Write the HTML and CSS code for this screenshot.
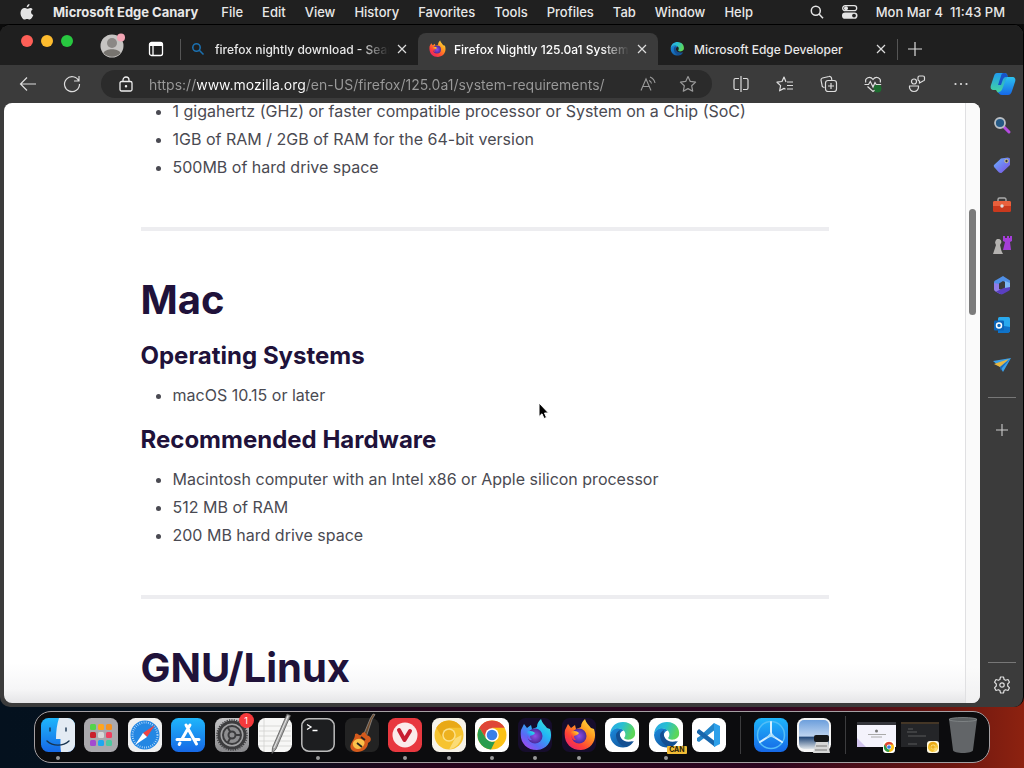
FILE: index.html
```html
<!DOCTYPE html>
<html lang="en">
<head>
<meta charset="utf-8">
<title>Firefox Nightly 125.0a1 System Requirements</title>
<link rel="stylesheet" href="styles.css">
</head>
<body>
<svg class="defs" width="0" height="0" aria-hidden="true">
  <defs>
    <linearGradient id="gBlue" x1="0" y1="0" x2="0" y2="1"><stop offset="0" stop-color="#1fb6fb"/><stop offset="1" stop-color="#1668e6"/></linearGradient>
    <linearGradient id="gGray" x1="0" y1="0" x2="0" y2="1"><stop offset="0" stop-color="#c5c5c7"/><stop offset="1" stop-color="#88888b"/></linearGradient>
    <linearGradient id="gFox" x1="1" y1="0" x2="0.2" y2="1"><stop offset="0" stop-color="#fff04a"/><stop offset=".4" stop-color="#ff9a1f"/><stop offset=".75" stop-color="#ff4038"/><stop offset="1" stop-color="#e5206f"/></linearGradient>
    <linearGradient id="gNight" x1="1" y1="0" x2="0.2" y2="1"><stop offset="0" stop-color="#3ff0d0"/><stop offset=".4" stop-color="#22b8f5"/><stop offset=".75" stop-color="#5b68f5"/><stop offset="1" stop-color="#a845f0"/></linearGradient>
    <radialGradient id="gOrb"><stop offset="0" stop-color="#9150e8"/><stop offset="1" stop-color="#4a2a9c"/></radialGradient>
    <linearGradient id="gEdgeTop" x1="0" y1="0" x2="1" y2="0.3"><stop offset="0" stop-color="#2aa4e8"/><stop offset=".5" stop-color="#28bfd2"/><stop offset="1" stop-color="#5cd65a"/></linearGradient>
    <linearGradient id="gEdgeLow" x1="0" y1="0" x2="1" y2="1"><stop offset="0" stop-color="#1b8be0"/><stop offset="1" stop-color="#114a8b"/></linearGradient>
    <linearGradient id="gCopA" x1="0" y1="0" x2="0" y2="1"><stop offset="0" stop-color="#1f9cf0"/><stop offset="1" stop-color="#45d69a"/></linearGradient>
    <linearGradient id="gCopB" x1="0" y1="0" x2="0" y2="1"><stop offset="0" stop-color="#2cc3ee"/><stop offset="1" stop-color="#1668e8"/></linearGradient>
    <linearGradient id="gPurple" x1="0" y1="0" x2="1" y2="1"><stop offset="0" stop-color="#69b5ff"/><stop offset="1" stop-color="#7a4be0"/></linearGradient>
    <linearGradient id="gSky" x1="0" y1="0" x2="0" y2="1"><stop offset="0" stop-color="#6d9fdc"/><stop offset=".55" stop-color="#bcd3ef"/><stop offset=".6" stop-color="#274c7c"/><stop offset="1" stop-color="#dfe5ea"/></linearGradient>
    <symbol id="fox" viewBox="0 0 34 34">
      <path d="M3 12l3-6 3 4 4-3 1 4c2-1 4-1 5-2 0-4 2-6 4-8 1 4 4 6 6 9l3 1c3 8 0 20-13 21C8 32 1 24 3 12z"/>
      <circle cx="17" cy="18" r="7.500" fill="url(#gOrb)"/>
      <path d="M9 14c3-2 6-1 8 1-1 2-3 2-5 3 0 2 1 3 2 4-3 1-6-3-5-8z"/>
    </symbol>
    <symbol id="edge" viewBox="0 0 34 34">
      <path fill="url(#gEdgeLow)" d="M5 17c1 10 9 14 17 12 3-1 5-3 7-6-7 4-13 1-14-4-1-4 2-6 4-7-6-4-13-2-14 5z"/>
      <path fill="url(#gEdgeTop)" d="M5 16C6 8 11 4 18 4c9 0 13 7 12 13-1 5-9 6-11 3 2-2 2-6-1-8-5-3-11-1-13 4z"/>
      <path fill="#144f92" d="M11 17c0-2 2-4 4-5-2 8 4 14 13 11-3 4-7 6-10 5-4-2-7-6-7-11z"/>
    </symbol>
    <symbol id="chrome" viewBox="0 0 34 34">
      <circle cx="17" cy="17" r="14.500" fill="#fbc116"/>
      <path fill="#df4636" d="M4.400 9.800a14.500 14.500 0 0 1 25.200 0H17l-6 10.700z"/>
      <path fill="#2a9c4e" d="M4.400 9.800L11 20.500l6 3.500 3-.5-4 8A14.500 14.500 0 0 1 4.400 9.800z"/>
      <circle cx="17" cy="17" r="6.800" fill="#fff"/><circle cx="17" cy="17" r="5.300" fill="#397fe8"/>
    </symbol>
    <symbol id="canary" viewBox="0 0 34 34">
      <circle cx="17" cy="17" r="14.500" fill="#f6c32f"/>
      <path fill="#e9a916" d="M4.400 9.800a14.500 14.500 0 0 1 25.200 0H17l-6 10.700z"/>
      <path fill="#fbdc77" d="M29.500 17A14.500 14.500 0 0 1 17 31.500l6-11z"/>
      <circle cx="17" cy="17" r="6.800" fill="#fbe08a"/><circle cx="17" cy="17" r="5.300" fill="#eeb21f"/>
    </symbol>
    <symbol id="x" viewBox="0 0 10 10"><path d="M1 1l8 8M9 1L1 9" fill="none" stroke="#ddd" stroke-width="1.200"/></symbol>
  </defs>
</svg>

<header class="menubar">
  <button class="apple" aria-label="Apple menu"><svg width="14" height="16" viewBox="0 0 14 16"><path fill="#e4e4e4" d="M9.500 0c.1 1.700-1.200 3.200-2.800 3.300C6.600 1.700 8 .2 9.500 0zM12.700 5.200c-2.500 1.600-1.900 4.700.6 5.800-.7 2-2.100 4.500-3.600 4.500-1 0-1.400-.6-2.600-.6s-1.600.6-2.500.6C2.700 15.500.4 11.900.5 8.700.6 5.600 2.600 4 4.400 4c1.200 0 2 .7 2.800.7S9 3.900 10.300 3.900c.9 0 1.800.5 2.400 1.300z"/></svg></button>
  <nav class="menus">
    <button class="menu app">Microsoft Edge Canary</button><button class="menu">File</button><button class="menu">Edit</button><button class="menu">View</button><button class="menu">History</button><button class="menu">Favorites</button><button class="menu">Tools</button><button class="menu">Profiles</button><button class="menu">Tab</button><button class="menu">Window</button><button class="menu">Help</button>
  </nav>
  <div class="status">
    <button aria-label="Spotlight"><svg width="14" height="14" viewBox="0 0 14 14" fill="none" stroke="#e4e4e4" stroke-width="1.500"><circle cx="5.800" cy="5.800" r="4.500"/><path d="M9 9l4 4.200"/></svg></button>
    <button aria-label="Control Center"><svg width="16" height="14" viewBox="0 0 16 14"><rect x=".7" y=".7" width="14" height="5" rx="2.500" fill="none" stroke="#e4e4e4" stroke-width="1.300"/><circle cx="4" cy="3.200" r="2" fill="#e4e4e4"/><rect y="7.500" width="15.500" height="6.300" rx="3.100" fill="#e4e4e4"/><circle cx="12" cy="10.600" r="1.900" fill="#222"/></svg></button>
    <time>Mon Mar 4&nbsp; 11:43 PM</time>
  </div>
</header>

<main class="window">
  <div class="tabstrip">
    <div class="lights"><button class="red" aria-label="Close"></button><button class="yellow" aria-label="Minimize"></button><button class="green" aria-label="Zoom"></button></div>
    <button class="profile" aria-label="Profile"><svg width="26" height="26" viewBox="0 0 26 26"><circle cx="12" cy="14" r="11.500" fill="#c6c4c2"/><circle cx="12" cy="11" r="5" fill="#8b8885"/><path d="M3.500 21c2-5 15-5 17 0a11.500 11.500 0 0 1-17 0z" fill="#77746f"/><circle cx="21" cy="5.500" r="4" fill="#f3a6b5"/></svg></button>
    <button class="workspace" aria-label="Tab actions"><svg width="16" height="16" viewBox="0 0 16 16" fill="none" stroke="#fff" stroke-width="1.300"><rect x="1.500" y="1.500" width="13" height="13" rx="2"/><path d="M1.500 3.500h13" stroke-width="3"/><path d="M5 4v10"/></svg></button>
    <div class="tab first">
      <svg class="fav" width="16" height="16" viewBox="0 0 16 16" fill="none" stroke="#1b6fae" stroke-width="1.600"><circle cx="6.500" cy="6.500" r="3.700"/><path d="M9.300 9.300l4.200 4.200"/></svg>
      <span class="title">firefox nightly download - Sear</span>
      <button class="close" aria-label="Close tab"><svg width="10" height="10"><use href="#x"/></svg></button>
    </div>
    <div class="tab active">
      <svg class="fav" width="18" height="18" fill="url(#gFox)"><use href="#fox"/></svg>
      <span class="title">Firefox Nightly 125.0a1 System</span>
      <button class="close" aria-label="Close tab"><svg width="10" height="10"><use href="#x"/></svg></button>
    </div>
    <div class="tab last">
      <svg class="fav" width="18" height="18"><use href="#edge"/></svg>
      <span class="title">Microsoft Edge Developer</span>
      <button class="close" aria-label="Close tab"><svg width="10" height="10"><use href="#x"/></svg></button>
    </div>
    <button class="newtab" aria-label="New tab"><svg width="14" height="14" viewBox="0 0 14 14"><path d="M7 0v14M0 7h14" stroke="#ddd" stroke-width="1.200"/></svg></button>
  </div>

  <div class="toolbar">
    <button class="tool" aria-label="Back"><svg width="18" height="16" viewBox="0 0 18 16" fill="none" stroke="#ddd" stroke-width="1.200"><path d="M17 8H1.500M8 1.500L1.500 8 8 14.500"/></svg></button>
    <button class="tool" aria-label="Reload"><svg width="18" height="18" viewBox="0 0 18 18" fill="none" stroke="#ddd" stroke-width="1.200"><path d="M15.800 6A7.500 7.500 0 1 0 16.500 9M16 1v5h-5"/></svg></button>
    <form class="address">
      <svg width="14" height="16" viewBox="0 0 14 16" fill="none" stroke="#eee" stroke-width="1.300"><rect x="1" y="5.500" width="12" height="9.500" rx="1.500"/><path d="M4 5.500V4a3 3 0 0 1 6 0v1.500"/><circle cx="7" cy="10.200" r=".6" fill="#eee"/></svg>
      <input type="text" aria-label="Address" value="https://www.mozilla.org/en-US/firefox/125.0a1/system-requirements/">
      <button type="button" aria-label="Read aloud"><svg width="16" height="16" viewBox="0 0 16 16" fill="none" stroke="#999" stroke-width="1.100"><path d="M1 14.500L6 3l5 11.500M2.800 10.500h6.400M9 4.500a4 4 0 0 1 2.500 3M10 1a8 8 0 0 1 5 6"/></svg></button>
      <button type="button" aria-label="Favorite this page"><svg width="18" height="18" viewBox="0 0 18 18" fill="none" stroke="#999" stroke-width="1.200" stroke-linejoin="round"><path d="M9 1.500l2.300 4.900 5.300.7-3.900 3.700 1 5.400L9 13.600l-4.700 2.600 1-5.400L1.400 7.100l5.300-.7z"/></svg></button>
    </form>
    <div class="actions">
      <button class="tool" aria-label="Split screen"><svg width="16" height="16" viewBox="0 0 16 16" fill="none" stroke="#ddd" stroke-width="1.200"><path d="M6 2.500H2.500a1.500 1.500 0 0 0-1.500 1.500v8a1.500 1.500 0 0 0 1.500 1.500H6M10 2.500h3.500A1.500 1.500 0 0 1 15 4v8a1.500 1.500 0 0 1-1.500 1.500H10M8 0v16"/></svg></button>
      <button class="tool" aria-label="Favorites"><svg width="18" height="16" viewBox="0 0 18 16" fill="none" stroke="#ddd" stroke-width="1.200" stroke-linejoin="round"><path d="M10 6L8 1 6 5.500l-5 .7 3.600 3.400-1 5.200L8 12.400l1.500.8M11 6h6M11 9.500h6M11 13h6"/></svg></button>
      <button class="tool" aria-label="Collections"><svg width="18" height="18" viewBox="0 0 18 18" fill="none" stroke="#ddd" stroke-width="1.200"><path d="M4.500 12.500L3 12a2 2 0 0 1-1-2L1 5a2 2 0 0 1 1.500-2L9 1.500A2 2 0 0 1 11.500 3l.3 2"/><rect x="5.500" y="5.500" width="11" height="11" rx="2.500"/><path d="M11 8v6M8 11h6"/></svg></button>
      <button class="tool" aria-label="Browser essentials"><svg width="18" height="17" viewBox="0 0 18 17" fill="none" stroke="#ddd" stroke-width="1.200"><circle cx="13.500" cy="12.500" r="4" fill="#1d6b2f" stroke="none"/><path d="M1.800 6.500C.5 2 6-.5 9 3.500c3-4 8.500-1.500 7.200 3M3.500 10.500L9 15.500l1.500-1.300M.5 8.500h4l1.800-3L9 11l2-4.500 1.200 2h5"/></svg></button>
      <button class="tool" aria-label="Share"><svg width="18" height="18" viewBox="0 0 18 18" fill="none" stroke="#ddd" stroke-width="1.200"><circle cx="6" cy="6.500" r="2.500"/><path d="M1.500 11h9c.5 3-1.500 5.500-4.500 5.500S1 14 1.500 11zM10 2.500A1.500 1.500 0 0 1 11.500 1H15a1.500 1.500 0 0 1 1.500 1.500v2A1.500 1.500 0 0 1 15 6l-3.500 2V6A1.500 1.500 0 0 1 10 4.500z"/></svg></button>
      <button class="tool" aria-label="Settings and more"><svg width="14" height="4" viewBox="0 0 14 4" fill="#ddd"><circle cx="1.500" cy="2" r="1.100"/><circle cx="7" cy="2" r="1.100"/><circle cx="12.500" cy="2" r="1.100"/></svg></button>
    </div>
    <button class="copilot" aria-label="Copilot"><svg width="26" height="24" viewBox="0 0 26 24"><path fill="url(#gCopA)" d="M7 1h7c3 0 4 2 3 4l-4 13c-1 2-2 3-4 3-1 0-2-1-3-3H4c-3 0-4-2-3-5L4 4c.5-2 1.500-3 3-3z"/><path fill="url(#gCopB)" d="M17 5h5c3 0 4 2 3 5l-3 9c-.8 2.500-2 4-4 4h-6c-2 0-3-1-4-3 3 0 4-2 5-5l3-8c.3-1 .5-2 1-2z"/><path d="M14 1c3 0 3 2 4 4h-2c-2 0-3 2-3.500 3.500L11 13H8l3-9c.5-2 1-3 3-3z" fill="#1753c8"/></svg></button>
  </div>

  <div class="viewport">
    <div class="page">
      <article class="article">
        <ul><li>1 gigahertz (GHz) or faster compatible processor or System on a Chip (SoC)</li><li>1GB of RAM / 2GB of RAM for the 64-bit version</li><li>500MB of hard drive space</li></ul>
        <hr>
        <h2>Mac</h2>
        <h3>Operating Systems</h3>
        <ul><li>macOS 10.15 or later</li></ul>
        <h3>Recommended Hardware</h3>
        <ul><li>Macintosh computer with an Intel x86 or Apple silicon processor</li><li>512 MB of RAM</li><li>200 MB hard drive space</li></ul>
        <hr>
        <h2>GNU/Linux</h2>
      </article>
      <div class="scrollbar"><div class="thumb"></div></div>
    </div>
    <aside class="sidebar">
      <button aria-label="Search"><svg width="18" height="18" viewBox="0 0 18 18"><path d="M11 11l5 5" stroke="#b44be0" stroke-width="3" stroke-linecap="round"/><circle cx="7" cy="7" r="5" fill="#265a86" stroke="#b9bec4" stroke-width="1.800"/></svg></button>
      <button aria-label="Shopping"><svg width="18" height="18" viewBox="0 0 18 18"><path d="M1 9l7-6.500 7-1 2 1V9l-8 7.500c-1 .8-2 .5-3 0L1.500 11.500C.8 10.500.5 10 1 9z" fill="url(#gPurple)"/><circle cx="13.500" cy="5" r="1.700" fill="#333" stroke="#d6cb8b"/></svg></button>
      <button aria-label="Tools"><svg width="20" height="18" viewBox="0 0 20 18"><path d="M6 5V3.500A1.500 1.500 0 0 1 7.500 2h5A1.500 1.500 0 0 1 14 3.500V5" fill="none" stroke="#aaa" stroke-width="1.400"/><rect x="1" y="5" width="18" height="11" rx="1.500" fill="#c9391d"/><path d="M1 6.500A1.500 1.500 0 0 1 2.500 5h15A1.500 1.500 0 0 1 19 6.500V10H1z" fill="#e8603c"/><circle cx="10" cy="10" r="1.700" fill="#ddd"/></svg></button>
      <button aria-label="Games"><svg width="20" height="20" viewBox="0 0 20 20"><path d="M11 1h2v2h2V1h2v2h1V1h2v5l-2 1 1 8h-8l2-8-2-1z" fill="#a43ed8"/><path d="M3.500 6a3 3 0 1 1 5 3L8 10l1.500 6 1.500 3H1l1-3 2-6-.5-1a3 3 0 0 1 0-3z" fill="#b4b2b0"/></svg></button>
      <button aria-label="Microsoft 365"><svg width="18" height="20" viewBox="0 0 18 20"><path fill="#4f8fe6" d="M4 4.500L10 1l7 4.500v4L10 6 6 8.500V13l-5-2.500V7c0-1.200 2-2 3-2.500z"/><path fill="#8f7ce8" d="M1 8l5 1v5l5 2-4 3-4.500-2.500C1.500 16 1 15 1 14z"/><path fill="#5a3fc0" d="M7 19l-4-2.500 9-4V7l5 2.500V14c0 1-.5 1.500-1.500 2L10 19c-1 .5-2 .5-3 0z"/><path fill="#7fb8f5" d="M12 6l5 2v4l-5 1z"/></svg></button>
      <button aria-label="Outlook"><svg width="18" height="18" viewBox="0 0 18 18"><rect x="5" y="1" width="12" height="15" rx="1.500" fill="#29a9ee"/><path d="M5 9l12 2v4.500L15.500 17H5z" fill="#0f73c9"/><rect x="1" y="4.500" width="10" height="10" rx="1" fill="#0b65b9"/><circle cx="6" cy="9.500" r="2.500" fill="none" stroke="#fff" stroke-width="1.500"/></svg></button>
      <button aria-label="Drop"><svg width="18" height="16" viewBox="0 0 18 16"><path fill="#3aa0ea" d="M0 4l18-3-8 14-3-5z"/><path fill="#e7b741" d="M1 7l15-5L7 10z"/><path fill="#1f6bb8" d="M7 10l10-8-8 9-1 3z"/></svg></button>
      <hr>
      <button aria-label="Customize"><svg width="12" height="12" viewBox="0 0 12 12"><path d="M6 0v12M0 6h12" stroke="#ccc" stroke-width="1.100"/></svg></button>
      <hr class="low">
      <button aria-label="Settings"><svg width="18" height="18" viewBox="0 0 18 18" fill="none" stroke="#ddd" stroke-width="1.200" stroke-linejoin="round"><path d="M7.500 1h3l.6 2.500 1.500.8 2.400-.8 1.500 2.700L14.700 8v2l1.800 1.800-1.500 2.700-2.400-.8-1.500.8-.6 2.500h-3l-.6-2.500-1.500-.8-2.400.8-1.500-2.700L3.300 10V8L1.500 6.200 3 3.500l2.400.8 1.500-.8z"/><circle cx="9" cy="9" r="2.200"/></svg></button>
    </aside>
    <svg class="cursor" width="12" height="18" viewBox="0 0 12 18" aria-hidden="true"><path d="M1 1v13.500l3-2.700 2 4.700 2.500-1-2-4.500h4z" fill="#000" stroke="#fff"/></svg>
  </div>
</main>

<footer class="desk">
<nav class="dock" aria-label="Dock">
  <button class="icon running" aria-label="Finder"><svg viewBox="0 0 34 34"><rect width="34" height="34" rx="7.500" fill="url(#gBlue)"/><path d="M18 0h8.500A7.500 7.500 0 0 1 34 7.500v19a7.500 7.500 0 0 1-7.500 7.500H20c-.6-4-.6-8-.5-13H15c0-8 1-15 3-21z" fill="#e3ebf3"/><path d="M9 10v3M25 10v3M6 23c6 5.500 16 5.500 22 0" fill="none" stroke="#17334f" stroke-width="1.400" stroke-linecap="round"/></svg></button>
  <button class="icon" aria-label="Launchpad"><svg viewBox="0 0 34 34"><rect width="34" height="34" rx="7.500" fill="#aaa9ad"/><rect x="6" y="6" width="6" height="6" rx="1.500" fill="#52d34a"/><rect x="14" y="6" width="6" height="6" rx="1.500" fill="#ffa51e"/><rect x="22" y="6" width="6" height="6" rx="1.500" fill="#f59220"/><rect x="6" y="14" width="6" height="6" rx="1.500" fill="#c9202b"/><rect x="14" y="14" width="6" height="6" rx="1.500" fill="#d8d8d8"/><rect x="22" y="14" width="6" height="6" rx="1.500" fill="#ef3f5e"/><rect x="6" y="22" width="6" height="6" rx="1.500" fill="#a34ad0"/><rect x="14" y="22" width="6" height="6" rx="1.500" fill="#1fa7ef"/><rect x="22" y="22" width="6" height="6" rx="1.500" fill="#4cc9a0"/></svg></button>
  <button class="icon" aria-label="Safari"><svg viewBox="0 0 34 34"><rect width="34" height="34" rx="7.500" fill="#f0f0f0"/><circle cx="17" cy="17" r="14.500" fill="#2487e3"/><circle cx="17" cy="17" r="12.500" fill="none" stroke="#c9e4fb" stroke-width="2" stroke-dasharray=".7 1.500"/><path d="M27 7L19 19l-4-4z" fill="#ef4444"/><path d="M7 27l12-8-4-4z" fill="#fff"/></svg></button>
  <button class="icon" aria-label="App Store"><svg viewBox="0 0 34 34"><rect width="34" height="34" rx="7.500" fill="url(#gBlue)"/><path d="M15 7l10.500 19M19 7l-8 14M6 21.500h13M23.500 21.500H28M9 25l-.8 1.500" fill="none" stroke="#fff" stroke-width="3" stroke-linecap="round"/></svg></button>
  <button class="icon" aria-label="System Settings, 1 alert"><svg viewBox="0 0 34 34"><rect width="34" height="34" rx="7.500" fill="url(#gGray)"/><circle cx="17" cy="17" r="13" fill="#a2a2a4" stroke="#3c3c3e" stroke-width="3"/><circle cx="17" cy="17" r="15" fill="none" stroke="#3c3c3e" stroke-width="1.500" stroke-dasharray="1.200 1.200"/><circle cx="17" cy="17" r="9" fill="#8e8e90" stroke="#3c3c3e" stroke-width="2"/><path d="M17 17h9M17 17l-4.500 8M17 17l-4.500-8" stroke="#3c3c3e" stroke-width="2"/><circle cx="17" cy="17" r="3.500" fill="#8e8e90" stroke="#3c3c3e" stroke-width="2"/></svg><span class="badge">1</span></button>
  <button class="icon" aria-label="TextEdit"><svg viewBox="0 0 34 34"><rect width="34" height="34" rx="7.500" fill="#f7f7f6"/><path d="M1 8h32M1 13h32M1 18h32M1 23h32M1 28h32M6 1v32" stroke="#d2d2d0" stroke-width=".8"/><path d="M29-4l3.500 1.500L18 31l-4 4.500.5-6z" fill="#a5a5a5" stroke="#555" stroke-width=".8"/><path d="M30-2L16 30" stroke="#e5e5e5"/></svg></button>
  <button class="icon running" aria-label="Terminal"><svg viewBox="0 0 34 34"><rect x=".8" y=".8" width="32.400" height="32.400" rx="7" fill="#1d1e20" stroke="#bbb" stroke-width="1.500"/><path d="M6 6.500l4 2.500-4 2.500M11.500 12.500h5" fill="none" stroke="#fff" stroke-width="1.300"/></svg></button>
  <button class="icon" aria-label="GarageBand"><svg viewBox="0 0 34 34"><rect width="34" height="34" rx="7.500" fill="#232323"/><path d="M28-4l2 .5-3 5-6 18-3-1.500L25.500 0z" fill="#6e4a2c" stroke="#aaa" stroke-width=".6"/><path d="M10 16c3-2 3 2 6 1 1-3 4-4 5-1 0 2 3 1 4 3 2 3 0 5-2 6 0 5-5 9-11 9-5 0-8-4-6-8 1-3 4-5 4-10z" fill="#d45a1c"/><path d="M9 23c3-3 7-3 10 0 2 3-2 8-6 8s-7-5-4-8z" fill="#fac14b"/><path d="M12 25l5 4M16 19l4 3" stroke="#222" stroke-width="1.800"/></svg></button>
  <button class="icon running" aria-label="Vivaldi"><svg viewBox="0 0 34 34"><rect width="34" height="34" rx="7.500" fill="#e8383f"/><circle cx="17" cy="17" r="12.500" fill="#fbeceb"/><path d="M11 12l5.500 10L22 13" fill="none" stroke="#c81f31" stroke-width="4" stroke-linecap="round" stroke-linejoin="round"/></svg></button>
  <button class="icon running" aria-label="Chrome Canary"><svg viewBox="0 0 34 34"><rect width="34" height="34" rx="7.500" fill="#f7f3e8"/><use href="#canary"/></svg></button>
  <button class="icon running" aria-label="Chrome"><svg viewBox="0 0 34 34"><rect width="34" height="34" rx="7.500" fill="#fff"/><use href="#chrome"/></svg></button>
  <button class="icon running" aria-label="Firefox Nightly"><svg viewBox="0 0 34 34" fill="url(#gNight)"><rect width="34" height="34" rx="7.500" fill="#160d2c"/><use href="#fox"/></svg></button>
  <button class="icon running" aria-label="Firefox"><svg viewBox="0 0 34 34" fill="url(#gFox)"><rect width="34" height="34" rx="7.500" fill="#160d2c"/><use href="#fox"/></svg></button>
  <button class="icon" aria-label="Microsoft Edge"><svg viewBox="0 0 34 34"><rect width="34" height="34" rx="7.500" fill="#fff"/><use href="#edge"/></svg></button>
  <button class="icon running" aria-label="Microsoft Edge Canary"><svg viewBox="0 0 34 34"><rect width="34" height="34" rx="7.500" fill="#fff"/><use href="#edge"/></svg><span class="can">CAN</span></button>
  <button class="icon" aria-label="Visual Studio Code"><svg viewBox="0 0 34 34"><rect width="34" height="34" rx="7.500" fill="#fff"/><path d="M22 5l-14 13-3 2v3l2 1L24 11z" fill="#2486ca"/><path d="M5 13l2-2 17 13-1 5L5 15z" fill="#1766ac"/><path d="M22 5l6 3v18l-6 3z" fill="#2da0ea"/></svg></button>
  <span class="sep"></span>
  <button class="icon" aria-label="TestFlight"><svg viewBox="0 0 34 34"><rect width="34" height="34" rx="7.500" fill="url(#gBlue)"/><circle cx="17" cy="17" r="13.500" fill="none" stroke="#53bdf7" stroke-width="1.500"/><path d="M17 17V4M17 17L6 24M17 17l11 7" stroke="#d6f0ff" stroke-width="2" stroke-linecap="round"/><path d="M17 19v-5l-5 6zM17 19l5 1-4-5z" fill="#a5ddfb"/></svg></button>
  <button class="icon" aria-label="Preview"><svg viewBox="0 0 34 34"><rect width="34" height="34" rx="7.500" fill="#f5f5f5"/><rect x="2" y="2" width="30" height="29" rx="5" fill="url(#gSky)"/><path d="M19 24h12l2 11H16z" fill="#d5d6d6"/><rect x="17" y="17" width="15" height="7" rx="2" fill="#151719"/><path d="M19 28h11M18 32h12" stroke="#777"/></svg></button>
  <span class="sep"></span>
  <button class="icon" aria-label="Minimized Chrome window"><svg viewBox="0 0 34 34"><rect x="-2" y="4" width="39" height="25" fill="#f4f3fc"/><path d="M-2 4h39v3H-2z" fill="#33343a"/><path d="M-2 20l9 9h-9z" fill="#d2c5ee"/><circle cx="17.500" cy="13" r="1.500" fill="#777"/><path d="M9 16.500h18M12 19h11" stroke="#aaa"/><rect x="24" y="23" width="12" height="12" rx="3" fill="#fff"/><use href="#chrome" x="24" y="23" width="12" height="12"/></svg></button>
  <button class="icon" aria-label="Minimized Canary window"><svg viewBox="0 0 34 34"><rect x="-2" y="4" width="38" height="25" fill="#242528"/><path d="M-2 4h38v2H-2z" fill="#443626"/><path d="M5 11h5M4 14h10M5 18h18M5 26h9" stroke="#686868" stroke-width=".8"/><rect x="24" y="23" width="12" height="12" rx="3" fill="#fff8e0"/><use href="#canary" x="24" y="23" width="12" height="12"/></svg></button>
  <button class="icon" aria-label="Trash"><svg viewBox="0 0 34 34"><path d="M3 1h28l-4 31c0 4-20 4-20 0z" fill="#727678" opacity=".85"/><ellipse cx="17" cy="1.500" rx="14" ry="2" fill="#5d6163" stroke="#858a8c" stroke-width=".8"/></svg></button>
</nav>
</footer>
</body>
</html>
```
FILE: styles.css
```css
* { box-sizing: border-box; }
body {
  margin: 0;
  height: 100vh;
  display: flex;
  flex-direction: column;
  overflow: hidden;
  font-family: Inter, "Noto Sans", sans-serif;
  font-size: 13px;
  color: #e8e8e8;
  background:
    linear-gradient(#0b0b0b, #0b0b0b) top / 100% 80% no-repeat,
    linear-gradient(90deg, #04111e, #06121f 25%, #26051c 42%, #2c0620 75%, #6d1710 93%, #8d2210);
}
button {
  display: flex;
  align-items: center;
  justify-content: center;
  padding: 0;
  border: 0;
  background: none;
  color: inherit;
  font: inherit;
}
svg { flex: none; overflow: visible; }
.defs { position: absolute; }

.menubar {
  flex: none;
  display: flex;
  align-items: center;
  height: 24px;
  padding: 0 19px 0 20px;
  background: #202020;
  white-space: nowrap;
}
.menus { display: flex; gap: 19px; margin-left: 19px; font-weight: 500; }
.menu.app { margin-right: 4px; font-weight: 700; }
.status { display: flex; align-items: center; gap: 18px; margin-left: auto; font-weight: 500; }

.window {
  flex: 1;
  min-height: 0;
  display: flex;
  flex-direction: column;
  border: 1px solid #000;
  border-width: 1px 1px 0 0;
  border-radius: 10px;
  overflow: hidden;
  background: #3b3b3b;
}
.tabstrip {
  flex: none;
  display: flex;
  align-items: center;
  height: 40px;
  padding-left: 21px;
  background: #1f1f1f;
}
.lights { display: flex; gap: 8px; margin-bottom: 8px; }
.lights button { width: 12px; height: 12px; border-radius: 50%; }
.red { background: #fe5f57; }
.yellow { background: #febc2e; }
.green { background: #28c840; }
.profile { margin-left: 27px; }
.workspace { margin: 8px 16px 0 22px; }
.tab {
  display: flex;
  align-items: center;
  flex: 0 1 240px;
  min-width: 0;
  height: 32px;
  margin-top: 8px;
  padding: 0 11px 0 10px;
}
.tab .fav { width: 18px; }
.tab.first { flex-basis: 238px; padding-left: 8px; border-left: 1px solid #555; border-image: linear-gradient(transparent 7px, #555 7px, #555 26px, transparent 26px) 1; }
.tab.last { border-right: 1px solid #555; border-image: linear-gradient(transparent 7px, #555 7px, #555 26px, transparent 26px) 1; }
.tab.active { background: #3b3b3b; border-radius: 8px 8px 0 0; }
.title {
  flex: 1;
  min-width: 0;
  margin: 0 8px;
  white-space: nowrap;
  font-size: 12px;
  font-weight: 500;
}
.first .title, .active .title {
  -webkit-mask-image: linear-gradient(90deg, #000 calc(100% - 28px), transparent);
  mask-image: linear-gradient(90deg, #000 calc(100% - 28px), transparent);
}
.active .title { color: #fff; }
.newtab { margin: 8px 0 0 10px; }

.toolbar { flex: none; display: flex; align-items: center; height: 38px; padding-left: 6px; }
.tool { width: 44px; height: 28px; }
.address {
  flex: 1;
  min-width: 0;
  display: flex;
  align-items: center;
  height: 28px;
  margin: 0 7px;
  padding: 0 15px 0 18px;
  border-radius: 14px;
  background: #2b2b2b;
}
.address input {
  flex: 1;
  min-width: 0;
  margin: 0 16px;
  padding: 0;
  border: 0;
  outline: 0;
  font: 400 14px Inter, sans-serif;
  color: transparent;
  background: linear-gradient(90deg, #9a9a9a 47px, #fff 47px, #fff 156px, #9a9a9a 156px);
  -webkit-background-clip: text;
  background-clip: text;
}
.address button + button { margin-left: 23px; }
.actions { display: flex; }
.copilot { width: 40px; }

.viewport { position: relative; flex: 1; min-height: 0; display: flex; padding: 0 0 4px 4px; }
.page {
  flex: 1;
  min-width: 0;
  display: flex;
  overflow: hidden;
  border-radius: 8px;
  background: linear-gradient(#fff calc(100% - 40px), #f6f6f7 calc(100% - 14px), #e5e5e7);
  color: #4a4a52;
}
.article { flex: 0 1 688px; margin: -6px auto 0; }
.article ul { margin: 0; padding-left: 32px; font-size: 16px; line-height: 28px; }
.article hr { height: 4px; margin: 46px 0; border: 0; background: #ededf0; }
.article h2, .article h3 { margin: 0; font-weight: 700; color: #20123a; }
.article h2 { font-size: 40px; line-height: 46px; padding-bottom: 18px; }
.article h3 { font-size: 24px; line-height: 30px; margin-bottom: 10px; }
.article ul + h3 { margin-top: 16px; }
.scrollbar { flex: none; width: 15px; padding: 106px 4px 0 3px; border-left: 1px solid #e0e0e2; background: linear-gradient(#fafafa 94%, #f0f0f1); }
.thumb { height: 106px; border-radius: 4px; background: #7b7b7b; }

.sidebar { flex: none; width: 43px; display: flex; flex-direction: column; align-items: center; padding-top: 2px; margin-bottom: -2px; }
.sidebar button { flex: none; width: 40px; height: 40px; }
.sidebar hr { width: 28px; height: 1px; margin: 12px 0; border: 0; background: #777; }
.sidebar .low { margin: auto 0 2px; }
.cursor { position: absolute; left: 52.600%; top: 49.500%; }

.desk { flex: none; padding: 4px 34px 5px; }
.dock {
  display: flex;
  align-items: center;
  justify-content: space-between;
  height: 52px;
  padding: 0 9px 4px 6px;
  border: 1px solid #a5a0a3;
  border-radius: 17px;
  background: #0c0c0e;
}
.icon { position: relative; width: 34px; height: 34px; }
.icon > svg { width: 34px; height: 34px; }
.running::after {
  content: "";
  position: absolute;
  left: 15px;
  bottom: -8px;
  width: 4px;
  height: 4px;
  border-radius: 50%;
  background: #999;
}
.sep { width: 1px; height: 38px; margin: 0 4px; background: #3c3c3e; }
.badge {
  position: absolute;
  right: -5px;
  top: -5px;
  width: 15px;
  height: 15px;
  border-radius: 50%;
  background: #f5393b;
  color: #fff;
  font-size: 9px;
  line-height: 15px;
}
.can {
  position: absolute;
  right: -4px;
  bottom: -2px;
  padding: 0 2px;
  border-radius: 1px;
  background: #f0bb35;
  color: #2b2108;
  font-size: 7px;
  font-weight: 700;
  line-height: 8px;
}
```
